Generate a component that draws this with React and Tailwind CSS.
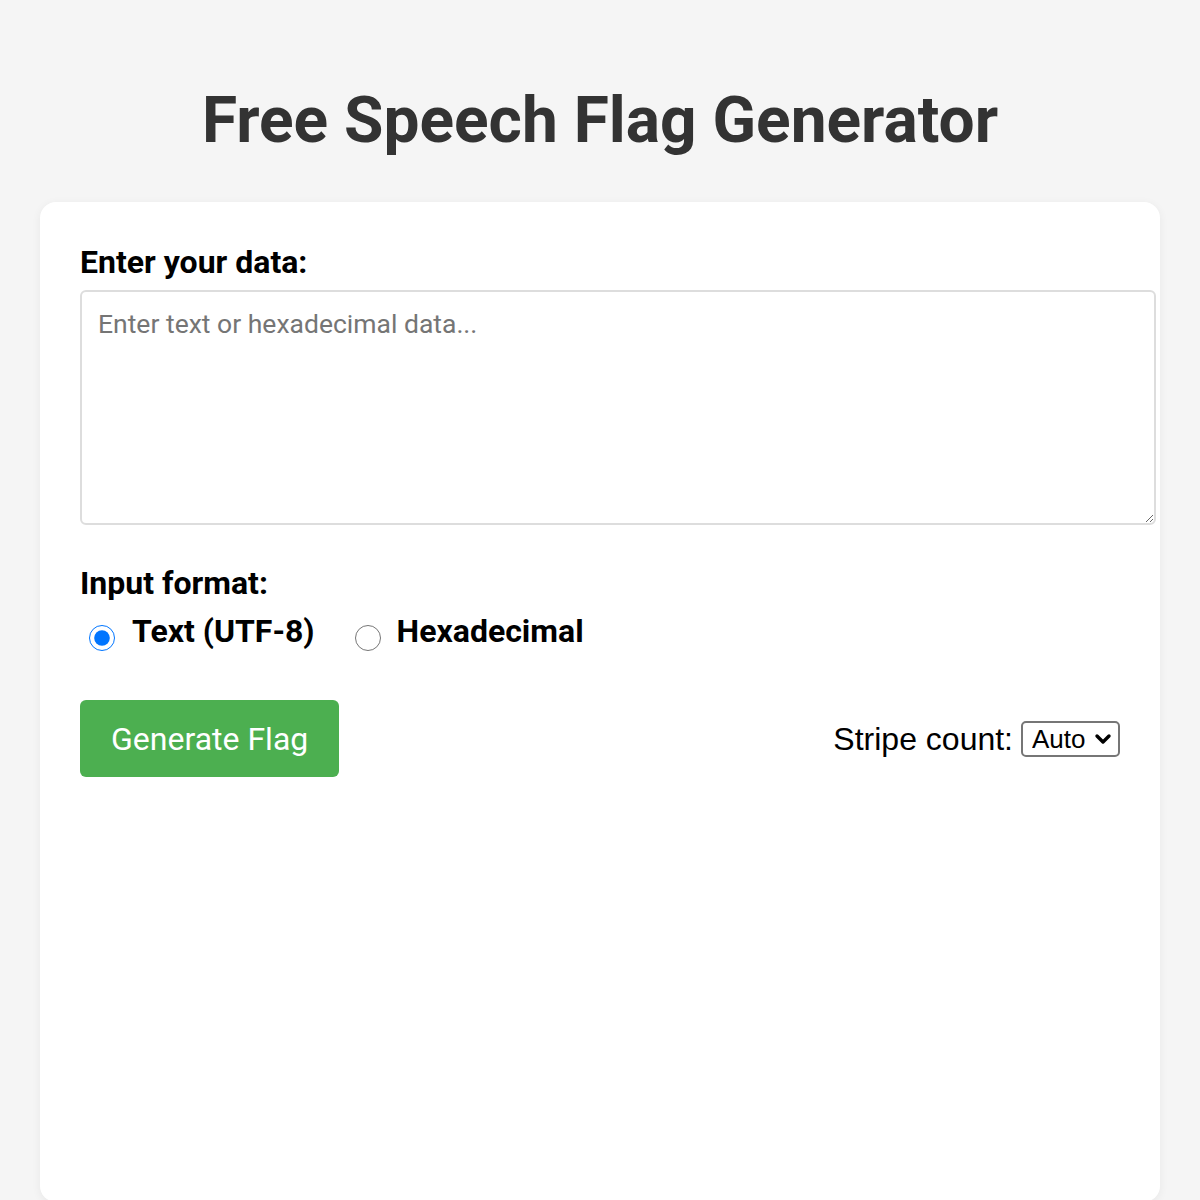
import React, { useState } from "react";

const App = () => {
  const [format, setFormat] = useState("text");
  const [data, setData] = useState("");

  return (
    <div className="min-h-screen bg-[#f5f5f5] font-['Roboto',sans-serif] px-10 pt-[89px]">
      <h1 className="text-center text-[64px] leading-none font-bold text-[#333]">
        Free Speech Flag Generator
      </h1>

      <div className="mt-[49px] bg-white rounded-2xl shadow-[0_2px_10px_rgba(0,0,0,0.06)] p-10 min-h-[1000px]">
        <label className="block text-[32px] font-bold text-black leading-[40px] mb-2">
          Enter your data:
        </label>
        <textarea
          className="block w-[1076px] h-[235px] border-2 border-[#ddd] rounded-md px-4 py-3 text-[26.5px] text-black placeholder:text-[#757575] outline-none"
          placeholder="Enter text or hexadecimal data..."
          value={data}
          onChange={(e) => setData(e.target.value)}
        />

        <p className="mt-[38px] text-[32px] font-bold text-black leading-[40px]">Input format:</p>
        <div className="flex items-center gap-10 mt-1 pl-[9px] leading-[48px]">
          <label className="flex items-center gap-[17px] text-[32px] font-bold text-black">
            <input
              type="radio"
              name="fmt"
              checked={format === "text"}
              onChange={() => setFormat("text")}
              className="w-[26px] h-[26px] mt-[14px] accent-[#0075ff]"
            />
            Text (UTF-8)
          </label>
          <label className="flex items-center gap-[16px] text-[32px] font-bold text-black">
            <input
              type="radio"
              name="fmt"
              checked={format === "hex"}
              onChange={() => setFormat("hex")}
              className="w-[26px] h-[26px] mt-[14px] accent-[#0075ff]"
            />
            Hexadecimal
          </label>
        </div>

        <div className="flex items-center justify-between mt-[45px]">
          <button className="bg-[#4caf50] text-white text-[32px] px-[31px] h-[77px] rounded-md">
            Generate Flag
          </button>
          <div className="flex items-center gap-2 font-['Liberation_Sans',sans-serif]">
            <span className="text-[32px] text-black">Stripe count:</span>
            <div className="relative">
              <select className="block appearance-none text-[26px] border-2 border-[#767676] rounded-[5px] pl-[9px] pr-[32px] h-[36px] leading-none text-black bg-white">
                <option>Auto</option>
                <option>3</option>
                <option>5</option>
                <option>7</option>
              </select>
              <svg
                className="absolute right-[8px] top-[11px] pointer-events-none"
                width="18"
                height="14"
                viewBox="0 0 18 14"
              >
                <path d="M3 4 L9 10 L15 4" fill="none" stroke="#000" strokeWidth="3.4" strokeLinecap="round" strokeLinejoin="round" />
              </svg>
            </div>
          </div>
        </div>
      </div>
    </div>
  );
};

export default App;
